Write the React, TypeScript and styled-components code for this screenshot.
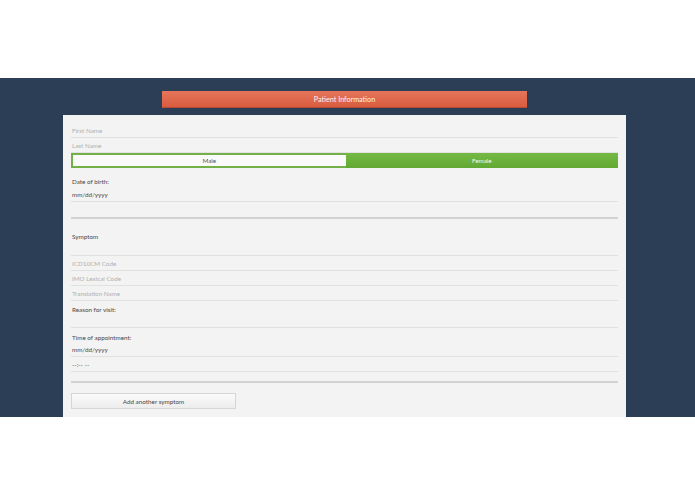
import * as React from 'react';
import styled, { createGlobalStyle } from 'styled-components';

const GlobalStyle = createGlobalStyle`
  html, body {
    margin: 0;
    padding: 0;
    background: #ffffff;
    font-family: Lato, "Noto Sans", sans-serif;
    font-weight: 400;
  }
  *, *::before, *::after {
    box-sizing: border-box;
  }
`;

const Page = styled.div`
  padding-top: 78px;
  height: 494px;
`;

const Band = styled.div`
  background: #2c3e55;
  height: 339px;
  padding-top: 13px;
  overflow: hidden;
`;

const Container = styled.div`
  width: 563px;
  margin-left: 63px;
`;

const Header = styled.div`
  width: 365px;
  height: 17px;
  margin: 0 auto 7px;
  background: linear-gradient(#e5765a, #d95c40);
  border-bottom: 1px solid #b94a35;
  color: #fff3ef;
  font-size: 7.2px;
  display: flex;
  align-items: center;
  justify-content: center;
`;

const Card = styled.div`
  background: #f3f3f3;
  padding: 8px 8px 20px 8px;
  min-height: 320px;
`;

const Field = styled.div<{ $dark?: boolean; $h?: number }>`
  height: ${p => p.$h ?? 15}px;
  border-bottom: 1px solid #e1e1e1;
  display: flex;
  align-items: center;
  padding-left: 1px;
  font-size: 6.3px;
  color: ${p => (p.$dark ? '#4a4a4a' : '#b0b0b0')};
`;

const Label = styled.div<{ $top?: number }>`
  margin-top: ${p => p.$top ?? 9}px;
  height: 10px;
  line-height: 10px;
  padding-left: 1px;
  font-size: 6.3px;
  color: #474747;
`;

const Toggle = styled.div`
  display: flex;
  height: 15px;
`;

const Option = styled.div<{ $active?: boolean }>`
  flex: 1;
  display: flex;
  align-items: center;
  justify-content: center;
  font-size: 6.3px;
  color: ${p => (p.$active ? '#f4faee' : '#555555')};
  background: ${p => (p.$active ? 'linear-gradient(#74b944, #62a934)' : '#fafafa')};
  border: ${p => (p.$active ? 'none' : '2px solid #73b04a')};
  border-right: none;
`;

const Divider = styled.div<{ $top: number }>`
  margin-top: ${p => p.$top}px;
  height: 2px;
  background: #d2d2d2;
`;

const Block = styled.div<{ $h: number }>`
  height: ${p => p.$h}px;
  border-bottom: 1px solid #e1e1e1;
  padding-left: 1px;
  padding-top: 14px;
  font-size: 6.3px;
  color: #474747;
`;

const Button = styled.button`
  display: block;
  margin-top: 10px;
  width: 165px;
  height: 16px;
  border: 1px solid #d6d6d6;
  background: linear-gradient(#fbfbfb, #ececec);
  font-family: inherit;
  font-weight: 400;
  font-size: 6.3px;
  color: #474747;
  padding: 0;
`;

export default function App() {
  return (
    <Page>
      <GlobalStyle />
      <Band>
        <Container>
          <Header>Patient Information</Header>
          <Card>
            <Field>First Name</Field>
            <Field>Last Name</Field>
            <Toggle>
              <Option>Male</Option>
              <Option $active>Female</Option>
            </Toggle>
            <Label $top={9}>Date of birth:</Label>
            <Field $dark>mm/dd/yyyy</Field>
            <Divider $top={15} />
            <Block $h={37}>Symptom</Block>
            <Field>ICD10CM Code</Field>
            <Field>IMO Lexical Code</Field>
            <Field>Translation Name</Field>
            <Label $top={4}>Reason for visit:</Label>
            <Field $h={13} />
            <Label $top={5}>Time of appointment:</Label>
            <Field $dark $h={14}>mm/dd/yyyy</Field>
            <Field $dark>--:-- --</Field>
            <Divider $top={9} />
            <Button>Add another symptom</Button>
          </Card>
        </Container>
      </Band>
    </Page>
  );
}
